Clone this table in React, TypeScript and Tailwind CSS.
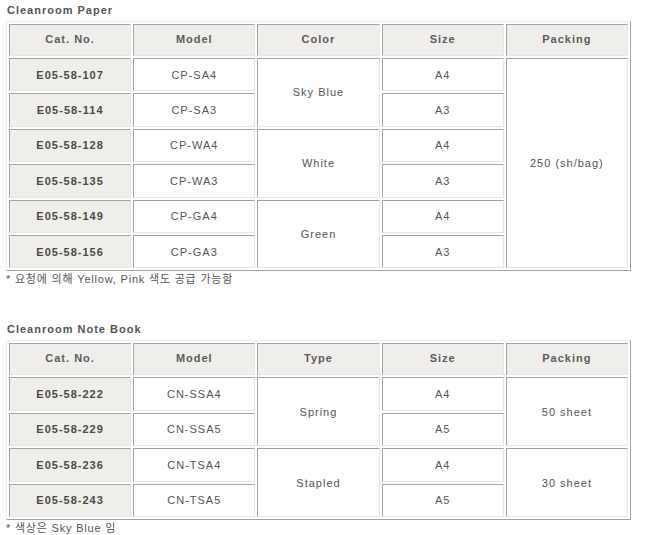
import React from 'react';

type Cell = { text: string; rowSpan?: number; kind?: 'cat' | 'body' };

const cellBase =
  'border border-solid border-t-[#a4a4a4] border-l-[#a4a4a4] border-r-[#e6e6e6] border-b-[#e6e6e6] text-center align-middle p-0';

function SpecTable({ headers, rows }: { headers: string[]; rows: Cell[][] }) {
  return (
    <table className="table-fixed w-[625px] border-separate border-spacing-[2px] border border-solid border-t-[#ececec] border-l-[#ececec] border-r-[#a4a4a4] border-b-[#a4a4a4]">
      <colgroup>
        {headers.map((h) => (
          <col key={h} />
        ))}
      </colgroup>
      <thead>
        <tr>
          {headers.map((h) => (
            <th
              key={h}
              className={`${cellBase} h-[32px] pb-[2px] bg-[#efeeea] font-bold text-[#5c5c5c] tracking-[1px]`}
            >
              {h}
            </th>
          ))}
        </tr>
      </thead>
      <tbody>
        {rows.map((row, i) => (
          <tr key={i}>
            {row.map((c, j) => (
              <td
                key={j}
                rowSpan={c.rowSpan}
                className={
                  c.kind === 'cat'
                    ? `${cellBase} h-[33.4px] bg-[#efeeea] font-bold text-[#4a4a4a] tracking-[1px]`
                    : `${cellBase} h-[33.4px] bg-white text-[#555555] tracking-[1px]`
                }
              >
                {c.text}
              </td>
            ))}
          </tr>
        ))}
      </tbody>
    </table>
  );
}

const paperRows: Cell[][] = [
  [
    { text: 'E05-58-107', kind: 'cat' },
    { text: 'CP-SA4' },
    { text: 'Sky Blue', rowSpan: 2 },
    { text: 'A4' },
    { text: '250 (sh/bag)', rowSpan: 6 },
  ],
  [{ text: 'E05-58-114', kind: 'cat' }, { text: 'CP-SA3' }, { text: 'A3' }],
  [
    { text: 'E05-58-128', kind: 'cat' },
    { text: 'CP-WA4' },
    { text: 'White', rowSpan: 2 },
    { text: 'A4' },
  ],
  [{ text: 'E05-58-135', kind: 'cat' }, { text: 'CP-WA3' }, { text: 'A3' }],
  [
    { text: 'E05-58-149', kind: 'cat' },
    { text: 'CP-GA4' },
    { text: 'Green', rowSpan: 2 },
    { text: 'A4' },
  ],
  [{ text: 'E05-58-156', kind: 'cat' }, { text: 'CP-GA3' }, { text: 'A3' }],
];

const noteRows: Cell[][] = [
  [
    { text: 'E05-58-222', kind: 'cat' },
    { text: 'CN-SSA4' },
    { text: 'Spring', rowSpan: 2 },
    { text: 'A4' },
    { text: '50 sheet', rowSpan: 2 },
  ],
  [{ text: 'E05-58-229', kind: 'cat' }, { text: 'CN-SSA5' }, { text: 'A5' }],
  [
    { text: 'E05-58-236', kind: 'cat' },
    { text: 'CN-TSA4' },
    { text: 'Stapled', rowSpan: 2 },
    { text: 'A4' },
    { text: '30 sheet', rowSpan: 2 },
  ],
  [{ text: 'E05-58-243', kind: 'cat' }, { text: 'CN-TSA5' }, { text: 'A5' }],
];

export default function App() {
  return (
    <div
      className="w-[648px] h-[535px] bg-white px-[6px] text-[11px] leading-[16px] overflow-hidden"
      style={{ fontFamily: '"Liberation Sans", "Noto Sans CJK KR", sans-serif' }}
    >
      <div className="pt-[2px] mb-[3px] pl-[1px] font-bold text-[#555555] tracking-[1px]">
        Cleanroom Paper
      </div>
      <SpecTable headers={['Cat. No.', 'Model', 'Color', 'Size', 'Packing']} rows={paperRows} />
      <div className="text-[#555555] tracking-[0.8px]">* 요청에 의해 Yellow, Pink 색도 공급 가능함</div>

      <div className="mt-[34px] mb-[3px] pl-[1px] font-bold text-[#555555] tracking-[1px]">
        Cleanroom Note Book
      </div>
      <SpecTable headers={['Cat. No.', 'Model', 'Type', 'Size', 'Packing']} rows={noteRows} />
      <div className="text-[#555555] tracking-[0.8px]">* 색상은 Sky Blue 임</div>
    </div>
  );
}
